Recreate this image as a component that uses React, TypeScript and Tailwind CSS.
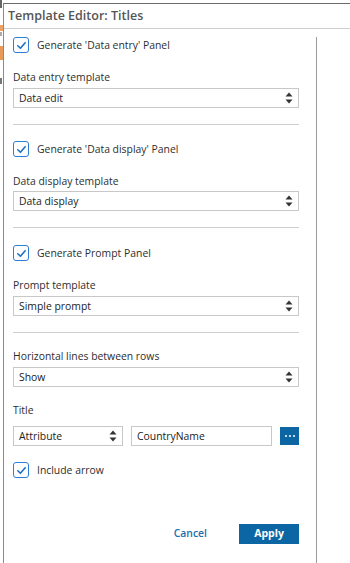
import React from 'react';

const FONT = { fontFamily: '"Open Sans", "Noto Sans", Arial, sans-serif' };

function Check() {
  return (
    <span className="w-4 h-4 shrink-0 rounded-[3px] border border-[#2b7fd6] bg-white flex items-center justify-center">
      <svg viewBox="0 0 12 12" className="w-[11px] h-[11px]">
        <path d="M2 6.3 L4.8 9 L10 3" fill="none" stroke="#1f72c8" strokeWidth="1.8" strokeLinecap="round" strokeLinejoin="round" />
      </svg>
    </span>
  );
}

function CheckRow({ label, className = '' }: { label: string; className?: string }) {
  return (
    <div className={`flex items-center h-4 gap-2 ${className}`}>
      <Check />
      <span className="text-[10.4px] leading-[14px] text-[#2e2e2e]">{label}</span>
    </div>
  );
}

function Arrows() {
  return (
    <svg viewBox="0 0 8 12" className="w-[8px] h-[12px] shrink-0">
      <path d="M4 0.5 L7.5 4.5 H0.5 Z" fill="#333" />
      <path d="M4 11.5 L7.5 7.5 H0.5 Z" fill="#333" />
    </svg>
  );
}

function Select({ value, className = '' }: { value: string; className?: string }) {
  return (
    <div className={`h-5 border border-[#c8c8c8] bg-white flex items-center justify-between pl-[5px] pr-[5px] ${className}`}>
      <span className="text-[10.4px] leading-[14px] text-[#222]">{value}</span>
      <Arrows />
    </div>
  );
}

function Label({ text, className = '' }: { text: string; className?: string }) {
  return <div className={`text-[10.4px] leading-[14px] h-[14px] text-[#2e2e2e] ${className}`}>{text}</div>;
}

function Sep({ className = '' }: { className?: string }) {
  return <div className={`h-px bg-[#cfcfcf] ${className}`} />;
}

export default function App() {
  return (
    <div className="w-[350px] h-[563px] bg-white flex overflow-hidden" style={FONT}>
      {/* page behind the dialog */}
      <div className="w-[3px] shrink-0 flex flex-col">
        <div className="h-[8px] w-[2px] bg-[#666]" />
        <div className="h-[17px]" />
        <div className="h-[6px] w-[3px] bg-[#f0a060]" />
        <div className="h-[4px] w-[2px] bg-[#aaa] mt-[1px]" />
        <div className="h-[10px]" />
        <div className="h-[14px] w-[3px] bg-[#e89a5a]" />
        <div className="h-[18px]" />
        <div className="h-[6px] w-[2px] bg-[#777]" />
      </div>

      {/* dialog */}
      <div className="flex-1 flex flex-col border-l border-t border-l-[#8a8a8a] border-t-[#6a6a6a] mt-[3px]">
        <div className="h-[25px] shrink-0 border-b border-[#cfcfcf] flex items-center pl-[4px]">
          <span className="text-[12.5px] font-semibold text-[#555] leading-none">Template Editor: Titles</span>
        </div>

        <div className="flex flex-1">
          <div className="w-[312px] shrink-0 pl-[9px] pr-[17px] pt-[8px] flex flex-col">
            <CheckRow label="Generate 'Data entry' Panel" />
            <Label text="Data entry template" className="mt-[17px]" />
            <Select value="Data edit" className="mt-[4px]" />
            <Sep className="mt-[16px]" />

            <CheckRow label="Generate 'Data display' Panel" className="mt-[16px]" />
            <Label text="Data display template" className="mt-[17px]" />
            <Select value="Data display" className="mt-[3px]" />
            <Sep className="mt-[16px]" />

            <CheckRow label="Generate Prompt Panel" className="mt-[17px]" />
            <Label text="Prompt template" className="mt-[17px]" />
            <Select value="Simple prompt" className="mt-[4px]" />
            <Sep className="mt-[16px]" />

            <Label text="Horizontal lines between rows" className="mt-[16px]" />
            <Select value="Show" className="mt-[4px]" />

            <Label text="Title" className="mt-[16px]" />
            <div className="mt-[9px] flex items-center">
              <Select value="Attribute" className="w-[110px]" />
              <div className="ml-[8px] w-[141px] h-5 border border-[#c8c8c8] bg-white flex items-center pl-[5px]">
                <span className="text-[10.4px] leading-[14px] text-[#222]">CountryName</span>
              </div>
              <div className="ml-[8px] w-[19px] h-[18px] bg-[#0b66a3] flex items-center justify-center gap-[2px]">
                <span className="w-[2px] h-[2px] bg-white rounded-full" />
                <span className="w-[2px] h-[2px] bg-white rounded-full" />
                <span className="w-[2px] h-[2px] bg-white rounded-full" />
              </div>
            </div>

            <CheckRow label="Include arrow" className="mt-[16px]" />

            <div className="mt-[46px] flex items-center justify-end">
              <span className="text-[10.4px] font-semibold text-[#1a6fb0] mr-[32px]">Cancel</span>
              <div className="w-[60px] h-5 bg-[#0b66a3] flex items-center justify-center">
                <span className="text-[10.5px] font-bold text-white">Apply</span>
              </div>
            </div>
          </div>
          <div className="w-px bg-[#9a9a9a] mt-[8px]" />
        </div>
      </div>
    </div>
  );
}
